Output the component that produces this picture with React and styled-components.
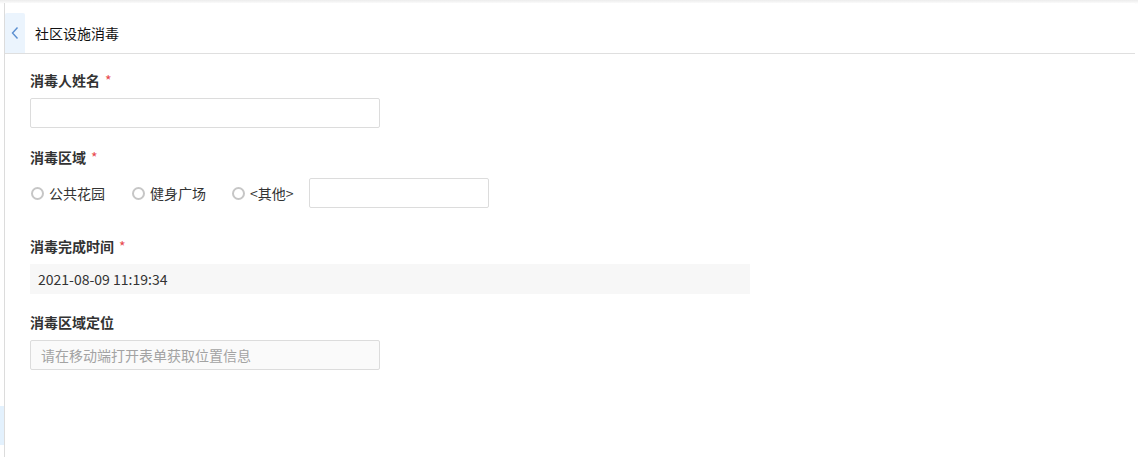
import React from 'react'
import styled, { createGlobalStyle } from 'styled-components'

const GlobalStyle = createGlobalStyle`
  html, body {
    margin: 0;
    padding: 0;
    background: #fff;
    font-family: "Noto Sans CJK SC", "Noto Sans", sans-serif;
    font-size: 14px;
    color: #333;
  }
`

const Page = styled.div`
  display: flex;
  height: 457px;
  overflow: hidden;
  background: linear-gradient(#ececec, #fff 4px);
`

const SideRail = styled.div`
  width: 4px;
  flex: none;
  padding-top: 406px;
  box-sizing: border-box;
`

const RailMark = styled.div`
  height: 39px;
  background: #e3f1fd;
`

const Main = styled.div`
  flex: 1;
  border-left: 1px solid #dcdcdc;
  margin-top: 3px;
  margin-right: 3px;
  background: #fff;
`

const Header = styled.div`
  display: flex;
  align-items: center;
  height: 40px;
  margin-top: 10px;
  border-bottom: 1px solid #dfdfdf;
`

const BackButton = styled.div`
  width: 20px;
  height: 40px;
  display: flex;
  align-items: center;
  justify-content: center;
  background: #ebf4fd;
  border-radius: 2px 2px 0 0;
`

const Title = styled.div`
  margin-left: 10px;
  color: #111;
`

const Form = styled.div`
  padding: 17px 25px 0;
`

const Field = styled.div`
  margin-bottom: ${p => p.$gap || 20}px;
`

const Label = styled.div`
  line-height: 18px;
  font-weight: bold;
  color: #333;
  margin-bottom: ${p => p.$gap || 9}px;
`

const Star = styled.span`
  color: #e8484d;
  margin-left: 5px;
  font-weight: normal;
`

const Input = styled.div`
  box-sizing: border-box;
  width: ${p => p.$width}px;
  height: 30px;
  border: 1px solid #dcdcdc;
  border-radius: 2px;
  background: ${p => (p.$disabled ? '#fafafa' : '#fff')};
  color: #a3a3a3;
  padding: 0 10px;
  display: flex;
  align-items: center;
`

const ReadOnly = styled.div`
  width: 720px;
  height: 30px;
  background: #f7f7f7;
  display: flex;
  align-items: center;
  padding-left: 8px;
  box-sizing: border-box;
  color: #333;
`

const RadioRow = styled.div`
  display: flex;
  align-items: center;
  height: 30px;
`

const Radio = styled.label`
  display: flex;
  align-items: center;
  margin-right: ${p => p.$mr}px;
  color: #333;
`

const Circle = styled.span`
  width: 9px;
  height: 9px;
  border: 2px solid #c6c6c6;
  border-radius: 50%;
  margin: 0 5px 0 1px;
  background: #fff;
`

const options = [
  { text: '公共花园', mr: 26 },
  { text: '健身广场', mr: 25 },
  { text: '<其他>', mr: 15 },
]

export default function App() {
  return (
    <>
      <GlobalStyle />
      <Page>
        <SideRail>
          <RailMark />
        </SideRail>
        <Main>
          <Header>
            <BackButton>
              <svg width="10" height="14" viewBox="0 0 10 14">
                <path d="M7.5 1.5 L2.5 7 L7.5 12.5" fill="none" stroke="#5b8fd0" strokeWidth="1.4" />
              </svg>
            </BackButton>
            <Title>社区设施消毒</Title>
          </Header>
          <Form>
            <Field>
              <Label>消毒人姓名<Star>*</Star></Label>
              <Input $width={350} />
            </Field>
            <Field $gap={29}>
              <Label $gap={12}>消毒区域<Star>*</Star></Label>
              <RadioRow>
                {options.map(o => (
                  <Radio key={o.text} $mr={o.mr}>
                    <Circle />
                    {o.text}
                  </Radio>
                ))}
                <Input $width={180} />
              </RadioRow>
            </Field>
            <Field $gap={19}>
              <Label>消毒完成时间<Star>*</Star></Label>
              <ReadOnly>2021-08-09 11:19:34</ReadOnly>
            </Field>
            <Field>
              <Label>消毒区域定位</Label>
              <Input $width={350} $disabled>请在移动端打开表单获取位置信息</Input>
            </Field>
          </Form>
        </Main>
      </Page>
    </>
  )
}
